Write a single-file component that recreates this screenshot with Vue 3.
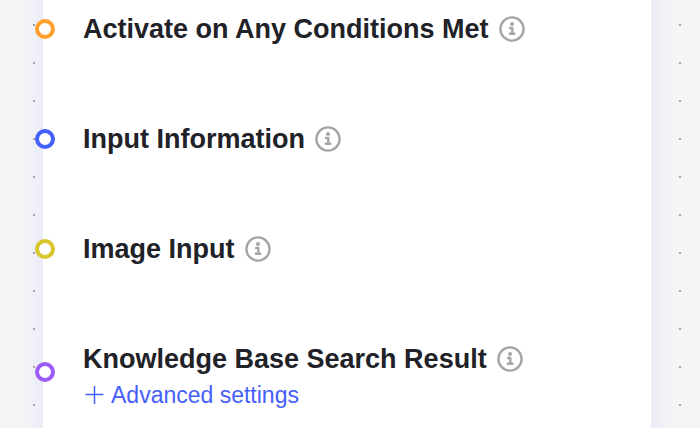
<script setup>
const inputs = [
  { name: 'Activate on Any Conditions Met', tone: 'orange' },
  { name: 'Input Information', tone: 'blue' },
  { name: 'Image Input', tone: 'yellow' },
  { name: 'Knowledge Base Search Result', tone: 'purple', advanced: true },
]
</script>

<template>
  <main class="canvas">
    <section class="node">
      <div v-for="item in inputs" :key="item.name" class="row">
        <span class="port" :class="item.tone"></span>
        <div class="content">
          <div class="heading">
            <h2 class="title">{{ item.name }}</h2>
            <button class="info" type="button" :aria-label="'About ' + item.name">
              <svg viewBox="0 0 26 26" width="26" height="26" aria-hidden="true">
                <circle cx="13" cy="13" r="11.6" fill="none" stroke="#a5a6aa" stroke-width="2.4" />
                <circle cx="13" cy="8" r="2" fill="#a5a6aa" />
                <path d="M11.1 12H13.3V17.6M10.9 17.8H15.3" fill="none" stroke="#a5a6aa" stroke-width="2.4" stroke-linecap="round" stroke-linejoin="round" />
              </svg>
            </button>
          </div>
          <button v-if="item.advanced" class="advanced" type="button">
            <svg viewBox="0 0 20 20" width="20" height="20" aria-hidden="true">
              <path d="M9.5 1V19M0.5 9.5H18.5" fill="none" stroke="#4460fa" stroke-width="1.5" />
            </svg>
            <span>Advanced settings</span>
          </button>
        </div>
      </div>
    </section>
  </main>
</template>

<style>
body {
  margin: 0;
  background: #f4f4f6;
}
</style>

<style scoped>
.canvas {
  box-sizing: border-box;
  min-height: 100vh;
  padding: 0 49px 0 43px;
  overflow: hidden;
  display: flex;
  background-color: #f4f4f6;
  background-image:
    radial-gradient(circle at 19px 19px, #a3a3a7 0, #a3a3a7 1px, transparent 1px),
    linear-gradient(to right, transparent 22px, #ececf7 43px, #ececf7 calc(100% - 49px), #f1f0f7 calc(100% - 40px), transparent calc(100% - 28px));
  background-size: 38px 38px, 100% 100%;
  background-position: 15px 6px, 0 0;
  font-family: "Liberation Sans", Arial, sans-serif;
}

.node {
  flex: 1;
  min-width: 0;
  background: #fff;
}

.row {
  display: flex;
  align-items: center;
  height: 58px;
  margin-bottom: 52px;
}

.row:last-child {
  height: 84px;
  margin-bottom: 0;
}

.port {
  box-sizing: border-box;
  flex: none;
  width: 20px;
  height: 20px;
  margin-left: -8px;
  border: 4px solid;
  border-radius: 50%;
  background: #fff;
}

.orange { border-color: #ff9f2c; }
.blue { border-color: #4460fa; }
.yellow { border-color: #d8c62c; }
.purple { border-color: #9e5cf7; }

.content {
  display: flex;
  flex-direction: column;
  align-items: flex-start;
  gap: 4px;
  margin-left: 28px;
}

.row:last-child .content {
  padding-top: 10px;
}

.heading {
  display: flex;
  align-items: center;
  gap: 10px;
}

.title {
  margin: 0;
  color: #202227;
  font-size: 27px;
  line-height: 32px;
  white-space: nowrap;
}

.info,
.advanced {
  display: flex;
  align-items: center;
  padding: 0;
  border: 0;
  background: none;
  font-family: inherit;
  cursor: pointer;
}

.advanced {
  gap: 6px;
  padding-left: 2px;
  color: #4460fa;
  font-size: 23px;
  line-height: 32px;
}
</style>
